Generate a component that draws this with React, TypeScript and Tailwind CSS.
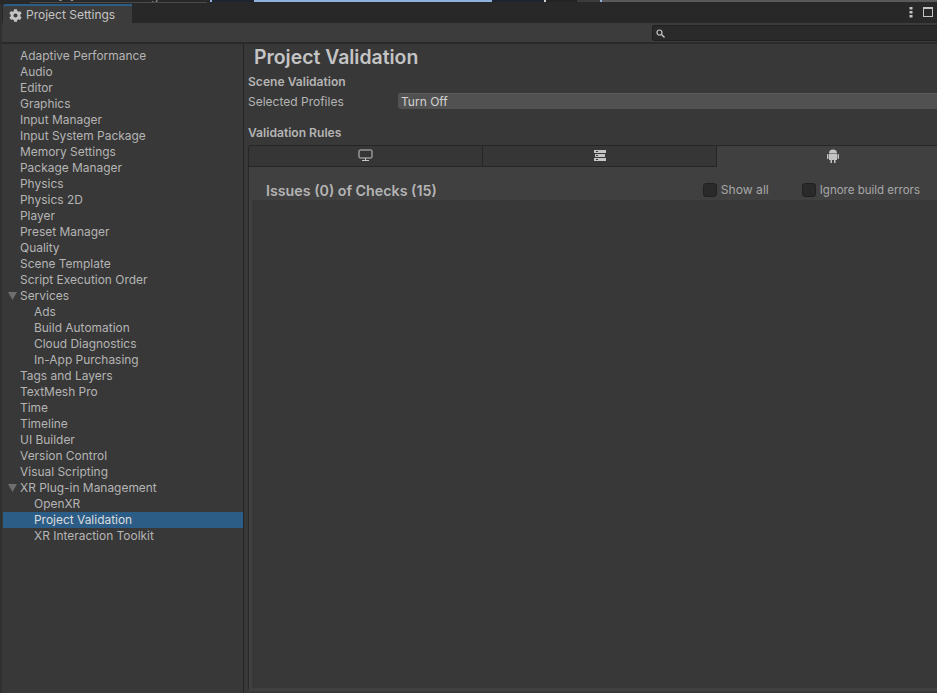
import React from "react";
import { FaCog } from "react-icons/fa";

type Item = { label: string; indent?: number; arrow?: boolean; selected?: boolean };

const items: Item[] = [
  { label: "Adaptive Performance" },
  { label: "Audio" },
  { label: "Editor" },
  { label: "Graphics" },
  { label: "Input Manager" },
  { label: "Input System Package" },
  { label: "Memory Settings" },
  { label: "Package Manager" },
  { label: "Physics" },
  { label: "Physics 2D" },
  { label: "Player" },
  { label: "Preset Manager" },
  { label: "Quality" },
  { label: "Scene Template" },
  { label: "Script Execution Order" },
  { label: "Services", arrow: true },
  { label: "Ads", indent: 1 },
  { label: "Build Automation", indent: 1 },
  { label: "Cloud Diagnostics", indent: 1 },
  { label: "In-App Purchasing", indent: 1 },
  { label: "Tags and Layers" },
  { label: "TextMesh Pro" },
  { label: "Time" },
  { label: "Timeline" },
  { label: "UI Builder" },
  { label: "Version Control" },
  { label: "Visual Scripting" },
  { label: "XR Plug-in Management", arrow: true },
  { label: "OpenXR", indent: 1 },
  { label: "Project Validation", indent: 1, selected: true },
  { label: "XR Interaction Toolkit", indent: 1 },
];

function Row({ item }: { item: Item }) {
  return (
    <div
      className={`relative flex h-4 items-center leading-4 ${item.selected ? "bg-[#2c5d87] text-[#dcdcdc]" : "text-[#b4b4b4]"} ${item.indent ? "pl-[31px]" : "pl-[17px]"}`}
    >
      {item.arrow && (
        <svg width="9" height="8" viewBox="0 0 9 8" className="absolute left-[5px] top-[4px]">
          <path d="M0 0h9L4.5 8z" fill="#6e6e6e" />
        </svg>
      )}
      {item.label}
    </div>
  );
}

function Check({ label, className }: { label: string; className?: string }) {
  return (
    <div className="flex items-center gap-[4px]">
      <div className="h-[14px] w-[14px] rounded-[3px] border border-[#212121] bg-[#2a2a2a]" />
      <span className={className}>{label}</span>
    </div>
  );
}

export default function App() {
  return (
    <div
      className="flex h-[693px] w-[937px] flex-col overflow-hidden bg-[#383838] text-[11.95px] text-[#b4b4b4]"
      style={{ fontFamily: "Inter, sans-serif" }}
    >
      <div className="flex h-[4px] shrink-0 items-start bg-[#282828]">
        <div className="ml-[30px] h-[3px] w-[177px] overflow-hidden border-b border-[#4a4a4a] pl-[28px]">
          <div className="-mt-[11px] leading-[14px] text-[#9a9a9a]">[S] Directional Light</div>
        </div>
        <div className="ml-[3px] h-[2px] w-[2px] bg-[#8fb1dc]" />
        <div className="h-[2px] w-[42px] bg-[#1c2430]" />
        <div className="h-[2px] w-[238px] bg-[#8fb1dc]" />
        <div className="h-[2px] w-[52px] bg-[#1c2430]" />
        <div className="h-[2px] w-[2px] bg-[#d0d0d0]" />
        <div className="h-[2px] w-[31px] bg-[#232323]" />
        <div className="h-[2px] w-[23px] bg-[#3c3c3c]" />
        <div className="h-[2px] w-[2px] bg-[#8fb1dc]" />
        <div className="h-[2px] flex-1 bg-[#5a5a5a]" />
      </div>
      <div className="flex min-h-0 flex-1 flex-col border-l-2 border-[#303030]">
        <div className="flex h-[19px] shrink-0 items-stretch bg-[#282828]">
          <div className="ml-[1px] flex w-[129px] items-center gap-[4px] rounded-tl-[3px] border-t-2 border-[#2c5d87] bg-[#3c3c3c] pl-[6px] pt-[1px] text-[12px] text-[#c4c4c4]">
            <FaCog size={13} className="text-[#c4c4c4]" />
            <span>Project Settings</span>
          </div>
          <div className="flex-1" />
          <div className="flex items-center gap-[10px] pb-[3px] pr-[4px]">
            <svg width="4" height="11" viewBox="0 0 4 11">
              <rect x="0.5" y="0" width="3" height="2.5" fill="#c4c4c4" />
              <rect x="0.5" y="4" width="3" height="2.5" fill="#c4c4c4" />
              <rect x="0.5" y="8" width="3" height="2.5" fill="#c4c4c4" />
            </svg>
            <svg width="10" height="10" viewBox="0 0 10 10">
              <rect x="0.5" y="0.5" width="9" height="9" fill="none" stroke="#c4c4c4" />
              <rect x="0" y="0" width="10" height="2" fill="#c4c4c4" />
            </svg>
          </div>
        </div>
        <div className="flex h-[21px] shrink-0 items-center justify-end border-b-2 border-[#2a2a2a] bg-[#3c3c3c] pl-[650px] pt-[1px]">
          <div className="flex h-[16px] w-full items-center rounded-l-[3px] border border-r-0 border-[#1f1f1f] bg-[#2a2a2a] pl-[3px]">
            <svg width="9" height="9" viewBox="0 0 9 9">
              <circle cx="3.5" cy="3.5" r="2.5" fill="none" stroke="#c4c4c4" strokeWidth="1.2" />
              <path d="M5.5 5.5L8.5 8.5" stroke="#c4c4c4" strokeWidth="1.4" />
            </svg>
          </div>
        </div>
        <div className="flex min-h-0 flex-1">
          <div className="w-[242px] shrink-0 border-r border-[#262626] pl-[1px] pt-[4px]">
            {items.map((it) => (
              <Row key={it.label} item={it} />
            ))}
          </div>
          <div className="flex min-w-0 flex-1 flex-col pb-[2px] pl-[4px] pt-[1px]">
            <div className="pl-[6px] text-[19.4px] font-semibold leading-[24px] text-[#c4c4c4]">Project Validation</div>
            <div className="mt-[5px] text-[12.1px] font-semibold leading-[16px]">Scene Validation</div>
            <div className="mt-[3px] flex h-[16px] items-center text-[12px]">
              <span className="w-[150px] shrink-0 pt-[2px]">Selected Profiles</span>
              <div className="flex h-[16px] flex-1 items-center rounded-l-[3px] border-t border-[#5c5c5c] bg-[#515151] pl-[3px] text-[#d2d2d2]">Turn Off</div>
            </div>
            <div className="mt-[16px] text-[12.1px] font-semibold leading-[16px]">Validation Rules</div>
            <div className="mt-[4px] flex min-h-0 flex-1 flex-col">
              <div className="flex h-[22px] shrink-0 overflow-hidden">
                <div className="flex w-[235px] shrink-0 items-center justify-center rounded-tl-[3px] border border-[#262626] bg-[#363636] pb-[2px]">
                  <svg width="15" height="13" viewBox="0 0 15 13" fill="none" stroke="#c4c4c4">
                    <rect x="1" y="1" width="13" height="8" rx="1" />
                    <path d="M7.5 9v3M4 11.5h7" />
                  </svg>
                </div>
                <div className="flex w-[234px] shrink-0 items-center justify-center border-y border-r border-[#262626] bg-[#363636] pb-[2px]">
                  <svg width="12" height="11" viewBox="0 0 12 11" fill="#c4c4c4">
                    <path d="M0 0h12v3H0z" />
                    <path d="M1 4h10v3H1z" />
                    <path d="M0 8h12v3H0z" />
                    <path d="M2 1h2v1H2zM2 5h2v1H2zM2 9h2v1H2z" fill="#363636" />
                  </svg>
                </div>
                <div className="flex w-[232px] shrink-0 items-center justify-center border-t border-[#262626] bg-[#404040] pb-[2px]">
                  <svg width="12" height="14" viewBox="0 0 12 14" fill="#c4c4c4">
                    <path d="M2 4.5a4 4 0 018 0z" />
                    <path d="M2 5h8v6H8.5v3h-1.5v-3H5v3H3.5v-3H2z" />
                    <rect x="0" y="5" width="1.5" height="5" rx="0.7" />
                    <rect x="10.5" y="5" width="1.5" height="5" rx="0.7" />
                  </svg>
                </div>
              </div>
              <div className="flex h-[33px] shrink-0 items-center justify-between border-l border-[#2a2a2a] bg-[#404040] pl-[17px] pt-[13px] pr-[17px]">
                <span className="pt-[1px] text-[14.25px] font-semibold text-[#b4b4b4]">Issues (0) of Checks (15)</span>
                <div className="flex gap-[33px] text-[#a8a8a8]">
                  <Check label="Show all" className="pt-[1px] text-[12.1px]" />
                  <Check label="Ignore build errors" className="pt-[1px] text-[11.5px]" />
                </div>
              </div>
              <div className="min-h-0 flex-1 border-b-[3px] border-l border-[#2a2a2a] border-b-[#404040] bg-[#383838] shadow-[inset_3px_0_0_#404040]" />
            </div>
          </div>
        </div>
      </div>
    </div>
  );
}
